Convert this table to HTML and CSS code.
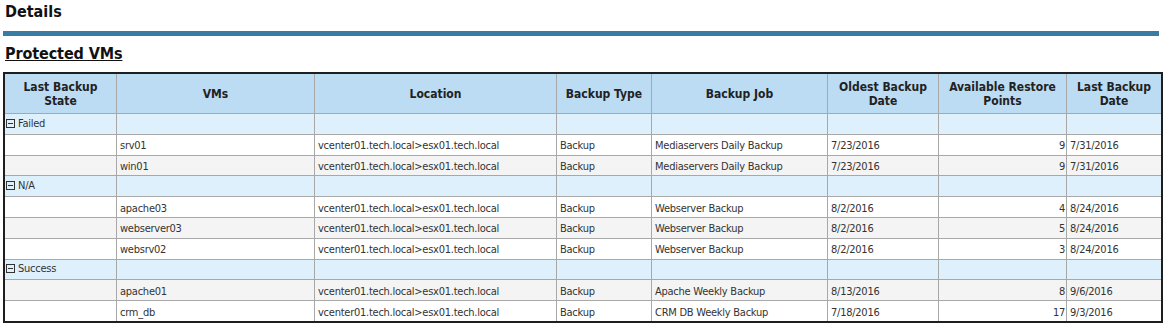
FILE: index.html
```html
<!DOCTYPE html>
<html>
<head>
<meta charset="utf-8">
<link rel="stylesheet" href="styles.css">
</head>
<body>
<div class="page">
  <div class="details">Details</div>
  <div class="bar"></div>
  <div class="section-title">Protected VMs</div>
  <table class="grid">
    <colgroup>
      <col class="c1"><col class="c2"><col class="c3"><col class="c4"><col class="c5"><col class="c6"><col class="c7"><col class="c8">
    </colgroup>
    <thead>
      <tr>
        <th>Last Backup<br>State</th>
        <th>VMs</th>
        <th>Location</th>
        <th>Backup Type</th>
        <th>Backup Job</th>
        <th>Oldest Backup<br>Date</th>
        <th>Available Restore<br>Points</th>
        <th>Last Backup<br>Date</th>
      </tr>
    </thead>
    <tbody>
      <tr class="group"><td><span class="toggle"></span>Failed</td><td></td><td></td><td></td><td></td><td></td><td></td><td></td></tr>
      <tr class="row"><td></td><td>srv01</td><td>vcenter01.tech.local&gt;esx01.tech.local</td><td>Backup</td><td>Mediaservers Daily Backup</td><td>7/23/2016</td><td class="num">9</td><td>7/31/2016</td></tr>
      <tr class="row alt"><td></td><td>win01</td><td>vcenter01.tech.local&gt;esx01.tech.local</td><td>Backup</td><td>Mediaservers Daily Backup</td><td>7/23/2016</td><td class="num">9</td><td>7/31/2016</td></tr>
      <tr class="group"><td><span class="toggle"></span>N/A</td><td></td><td></td><td></td><td></td><td></td><td></td><td></td></tr>
      <tr class="row"><td></td><td>apache03</td><td>vcenter01.tech.local&gt;esx01.tech.local</td><td>Backup</td><td>Webserver Backup</td><td>8/2/2016</td><td class="num">4</td><td>8/24/2016</td></tr>
      <tr class="row alt"><td></td><td>webserver03</td><td>vcenter01.tech.local&gt;esx01.tech.local</td><td>Backup</td><td>Webserver Backup</td><td>8/2/2016</td><td class="num">5</td><td>8/24/2016</td></tr>
      <tr class="row"><td></td><td>websrv02</td><td>vcenter01.tech.local&gt;esx01.tech.local</td><td>Backup</td><td>Webserver Backup</td><td>8/2/2016</td><td class="num">3</td><td>8/24/2016</td></tr>
      <tr class="group"><td><span class="toggle"></span>Success</td><td></td><td></td><td></td><td></td><td></td><td></td><td></td></tr>
      <tr class="row alt"><td></td><td>apache01</td><td>vcenter01.tech.local&gt;esx01.tech.local</td><td>Backup</td><td>Apache Weekly Backup</td><td>8/13/2016</td><td class="num">8</td><td>9/6/2016</td></tr>
      <tr class="row last"><td></td><td>crm_db</td><td>vcenter01.tech.local&gt;esx01.tech.local</td><td>Backup</td><td>CRM DB Weekly Backup</td><td>7/18/2016</td><td class="num">17</td><td>9/3/2016</td></tr>
    </tbody>
  </table>
</div>
</body>
</html>
```
FILE: styles.css
```css
html, body {
  margin: 0;
  padding: 0;
  background: #ffffff;
}
body {
  font-family: "DejaVu Sans Condensed", "DejaVu Sans", sans-serif;
  color: #333333;
}
.page {
  padding: 2px 3px 0 3px;
}
.details {
  font-size: 16px;
  font-weight: bold;
  line-height: 20px;
  color: #111111;
  padding-left: 2px;
}
.bar {
  margin-top: 9px;
  height: 5px;
  width: 1156px;
  background: #3a7ba6;
}
.section-title {
  margin-top: 7px;
  font-size: 16px;
  font-weight: bold;
  line-height: 22px;
  letter-spacing: -0.1px;
  color: #111111;
  text-decoration: underline;
  padding-left: 2px;
}
.grid {
  margin-top: 7px;
  width: 1160px;
  table-layout: fixed;
  border-collapse: separate;
  border-spacing: 0;
  border: 2px solid #1e1e1e;
  font-size: 11px;
}
.c1 { width: 112px; }
.c2 { width: 198px; }
.c3 { width: 242px; }
.c4 { width: 95px; }
.c5 { width: 176px; }
.c6 { width: 111px; }
.c7 { width: 128px; }
.c8 { width: 94px; }
.grid th {
  box-sizing: border-box;
  background: #bcdcf4;
  color: #222222;
  font-size: 12px;
  font-weight: bold;
  line-height: 14px;
  height: 40px;
  padding: 0 2px;
  border-right: 1px solid #a8a8a8;
  border-bottom: 1px solid #a8a8a8;
  text-align: center;
  vertical-align: middle;
}
.grid td {
  box-sizing: border-box;
  height: 20.8px;
  padding: 0 3px;
  border-right: 1px solid #a8a8a8;
  border-bottom: 1px solid #a8a8a8;
  white-space: nowrap;
  overflow: hidden;
  vertical-align: middle;
  line-height: 14px;
  letter-spacing: -0.25px;
}
.grid .row td { padding-top: 3px; }
.grid th:last-child,
.grid td:last-child { border-right: none; }
.grid tr.last td { border-bottom: none; height: 19.8px; }
.grid .row td { background: #ffffff; }
.grid .row.alt td { background: #f4f4f4; }
.grid .group td { background: #def0fc; padding-left: 1px; }
.grid td.num { text-align: right; padding-right: 1px; }
.toggle {
  display: inline-block;
  width: 7px;
  height: 7px;
  border: 1px solid #333333;
  margin-right: 3px;
  position: relative;
  vertical-align: -1px;
}
.toggle::after {
  content: "";
  position: absolute;
  left: 1px;
  right: 1px;
  top: 3px;
  height: 1px;
  background: #333333;
}
```
